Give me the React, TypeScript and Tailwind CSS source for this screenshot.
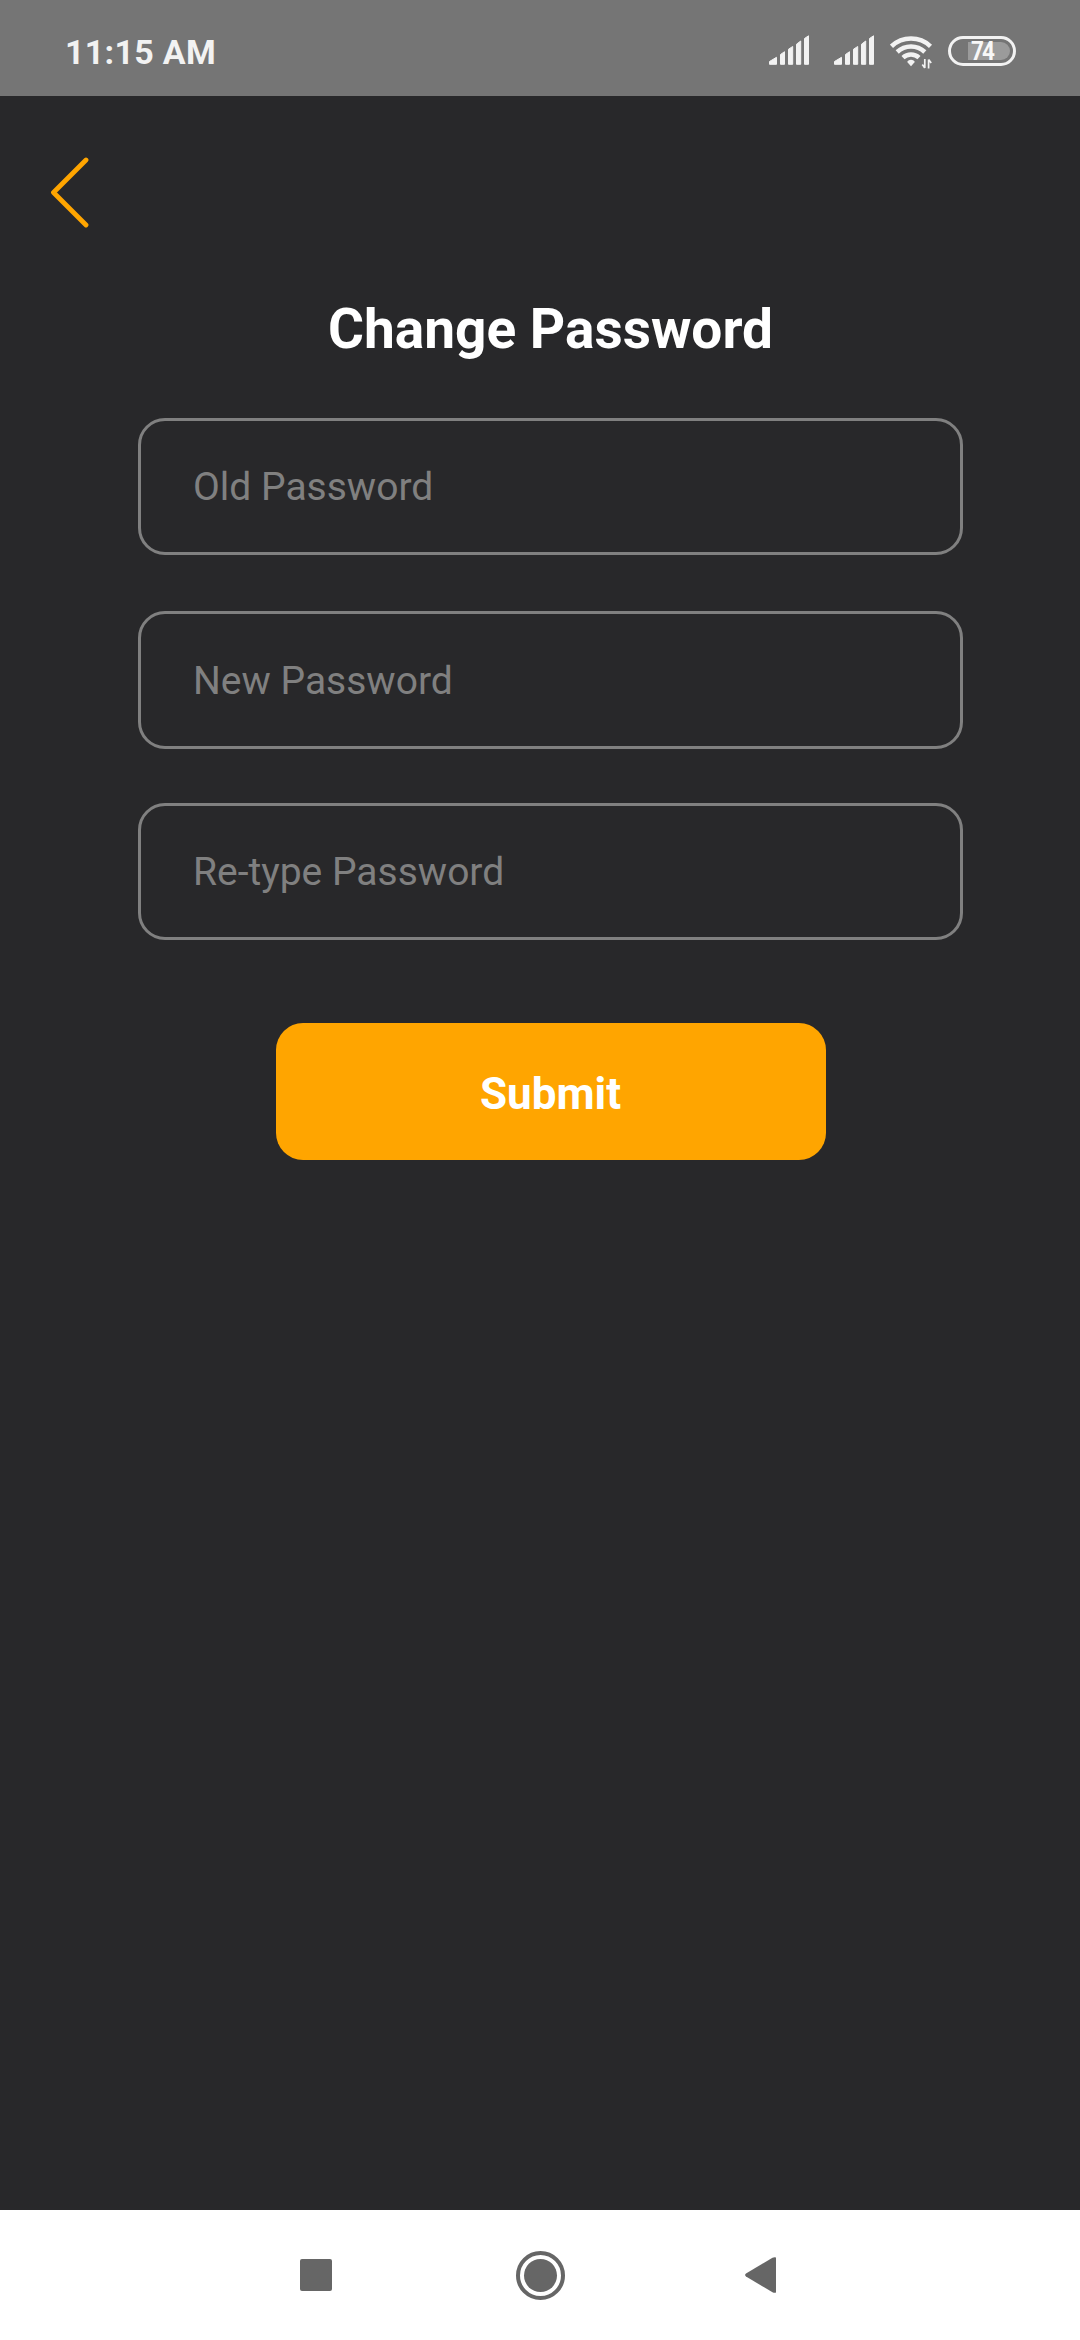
import { useState } from 'react'

const fields = [
  { name: 'old', placeholder: 'Old Password', className: 'h-[137px]' },
  { name: 'new', placeholder: 'New Password', className: 'mt-14 h-[138px] pt-px' },
  { name: 'retype', placeholder: 'Re-type Password', className: 'mt-[54px] h-[137px]' },
]

function SignalIcon({ className }: { className?: string }) {
  return (
    <svg className={className} width="41" height="30" viewBox="0 0 41 30" fill="#f2f2f2" stroke="#f2f2f2" strokeWidth="1" strokeLinejoin="round">
      <path d="M1.500 26.500 8.500 22.300v7H1.500z" />
      <path d="M12.500 19.500 16.500 16.700v12.600h-4z" />
      <path d="M20.500 14.200 24.700 11.500v17.800h-4.200z" />
      <path d="M28.500 9.200 32.700 6v23.300h-4.200z" />
      <path d="M36.500 3.500 40.500.800v28.500h-4z" />
    </svg>
  )
}

function WifiIcon({ className }: { className?: string }) {
  return (
    <svg className={className} width="44" height="34" viewBox="0 0 44 34" fill="none" stroke="#f2f2f2" strokeWidth="4.500">
      <path d="M1.500 11.300a28.500 28.500 0 0 1 39 0" />
      <path d="M7.200 17a20 20 0 0 1 27.600 0" />
      <path d="M13 22.600a11.700 11.700 0 0 1 16 0" />
      <path d="M21 24.700c2 0 3.500 1 3.800 2.400L21 31.200l-3.800-4.100c.3-1.400 1.800-2.400 3.800-2.400z" fill="#f2f2f2" stroke="none" />
      {/* data activity arrows */}
      <path d="M34.800 24v9M32.300 29.500l2.500 3.500M38.600 33.500v-9M41.200 28l-2.600-3.500" strokeWidth="1.700" />
    </svg>
  )
}

function BatteryIcon({ level, className }: { level: number; className?: string }) {
  return (
    <div className={`flex h-[30px] w-[68px] items-center rounded-full border-3 border-[#f2f2f2] pl-[17px] ${className}`}>
      <div className="flex h-[18px] w-[42px] items-center rounded-r-full rounded-l-xs bg-[#9b9b9b] pl-[3px]">
        <span className="origin-left scale-x-90 text-[25px] leading-none font-bold tracking-[-2px] text-[#f8f8f8]">{level}</span>
      </div>
    </div>
  )
}

function StatusBar() {
  return (
    <header className="flex h-24 shrink-0 items-start bg-[#757575] pr-16 pl-[65px]">
      <span className="mt-[32px] text-[34px] leading-[40px] font-bold tracking-[0.3px] text-[#f2f2f2]">11:15 AM</span>
      <SignalIcon className="mt-[35px] ml-auto" />
      <SignalIcon className="mt-[35px] ml-6" />
      <WifiIcon className="mt-[35px] ml-[16px]" />
      <BatteryIcon level={74} className="mt-[36px] ml-[14px]" />
    </header>
  )
}

function NavigationBar() {
  return (
    <nav className="flex h-[130px] shrink-0 items-center bg-white pl-[300px]">
      <button aria-label="Recent apps" className="size-8 rounded-[2px] bg-[#666]" />
      <button aria-label="Home" className="ml-[184px] flex size-[49px] items-center justify-center rounded-full border-4 border-[#666]">
        <span className="size-[33px] rounded-full bg-[#666]" />
      </button>
      <button aria-label="Back" className="ml-[180px]">
        <svg width="31" height="36" viewBox="0 0 31 36" fill="#666">
          <path d="M1 16.500 27.500.7Q29.500-.3 31 .5v35Q29.500 36.300 27.500 35.300L1 19.500Q-.8 18 1 16.500z" />
        </svg>
      </button>
    </nav>
  )
}

export default function App() {
  const [values, setValues] = useState<Record<string, string>>({})

  return (
    <div className="flex h-[2340px] w-[1080px] flex-col bg-[#28282a] font-[Roboto,sans-serif]">
      <StatusBar />

      <main className="flex flex-1 flex-col">
        <button aria-label="Go back" className="mt-[61px] ml-[50px] self-start">
          <svg className="block" width="40" height="72" viewBox="0 0 40 72" fill="none" stroke="#ffa500" strokeWidth="4.800" strokeLinecap="round" strokeLinejoin="round">
            <path d="M36 3 3.500 35.500 36 68" />
          </svg>
        </button>

        <form className="ml-[138px] flex w-[825px] flex-col items-center" onSubmit={(e) => e.preventDefault()}>
          <h1 className="mt-[68px] text-[55px] leading-[64px] font-bold text-white">Change Password</h1>

          <div className="mt-[57px] flex w-full flex-col">
            {fields.map((field) => (
              <input
                key={field.name}
                type="text"
                placeholder={field.placeholder}
                value={values[field.name] ?? ''}
                onChange={(e) => setValues({ ...values, [field.name]: e.target.value })}
                className={`w-full rounded-[27px] border-3 border-[#808080] bg-transparent px-[52px] text-[39px] text-white outline-none placeholder:text-[#808080] ${field.className}`}
              />
            ))}
          </div>

          <button type="submit" className="mt-[83px] h-[137px] w-[550px] rounded-[27px] bg-[#ffa500] pt-1 text-[44px] font-bold text-white">
            Submit
          </button>
        </form>
      </main>

      <NavigationBar />
    </div>
  )
}
